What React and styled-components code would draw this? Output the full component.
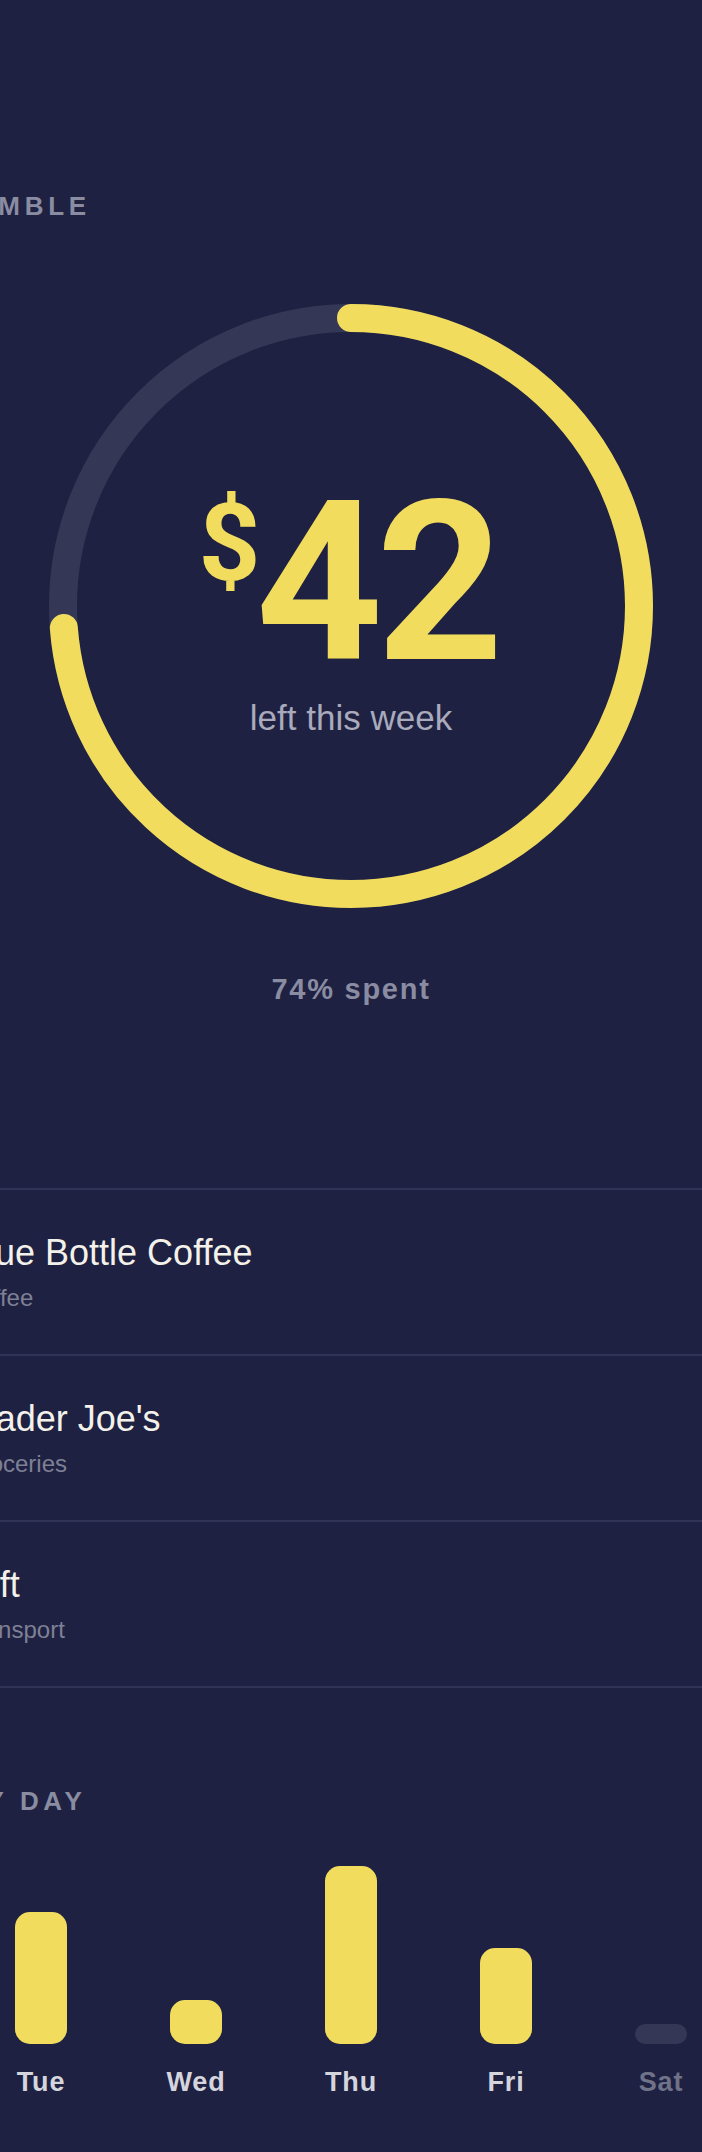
import React from "react";
import styled, { createGlobalStyle } from "styled-components";

const BG = "#1e2141";
const YELLOW = "#f1dc5e";
const TRACK = "#343856";
const RULE = "#303456";

const GlobalStyle = createGlobalStyle`
  html, body {
    margin: 0;
    padding: 0;
    background: ${BG};
    overflow: hidden;
  }
  body {
    font-family: "Liberation Sans", Arial, Helvetica, sans-serif;
    -webkit-font-smoothing: antialiased;
  }
  ul { margin: 0; padding: 0; list-style: none; }
`;

const Screen = styled.main`
  display: flex;
  justify-content: center;
  width: 100%;
  min-height: 2152px;
  background: ${BG};
`;

const Column = styled.div`
  flex: 0 0 776px;
  width: 776px;
  display: flex;
  flex-direction: column;
  padding: 190px 0 52px;
  box-sizing: border-box;
`;

const SectionLabel = styled.h2`
  margin: ${(p) => p.$top || 0}px 0 0;
  font-size: 26px;
  line-height: 32px;
  font-weight: 700;
  letter-spacing: 0.18em;
  text-transform: uppercase;
  color: #8a8ca2;
`;

/* ---------- weekly ring ---------- */

const RingWrap = styled.section`
  display: grid;
  place-items: center;
  width: 604px;
  height: 604px;
  margin: 82px auto 0;
  & > * {
    grid-area: 1 / 1;
  }
`;

const RingSvg = styled.svg`
  display: block;
  width: 604px;
  height: 604px;
`;

const Readout = styled.div`
  display: flex;
  flex-direction: column;
  align-items: center;
`;

const Amount = styled.div`
  display: flex;
  align-items: flex-start;
  color: ${YELLOW};
  font-family: Roboto, "Liberation Sans", Arial, sans-serif;
  font-weight: 700;
`;

const Currency = styled.span`
  font-size: 108px;
  line-height: 1;
  margin-top: 17px;
  letter-spacing: -5px;
`;

const Figure = styled.span`
  font-size: 222px;
  line-height: 1;
  letter-spacing: -0.03em;
  margin-right: 0.03em;
`;

const Caption = styled.div`
  margin-top: 2px;
  font-size: 35px;
  line-height: 44px;
  color: #a9aabb;
`;

const Spent = styled.div`
  margin-top: 63px;
  text-align: center;
  font-size: 29px;
  line-height: 36px;
  font-weight: 700;
  letter-spacing: 0.06em;
  color: #8a8ca2;
`;

/* ---------- transactions ---------- */

const List = styled.ul`
  margin-top: 181px !important;
`;

const Row = styled.li`
  display: flex;
  align-items: center;
  padding: 41px 0 41px;
  border-top: 2px solid ${RULE};
  &:last-child {
    border-bottom: 2px solid ${RULE};
  }
`;

const RowText = styled.div`
  display: flex;
  flex-direction: column;
  gap: 8px;
`;

const Merchant = styled.span`
  font-size: 36px;
  line-height: 44px;
  color: #f3f1ea;
`;

const Category = styled.span`
  font-size: 24px;
  line-height: 30px;
  color: #7e8096;
`;

/* ---------- spending by day ---------- */

const Chart = styled.div`
  display: flex;
  justify-content: center;
  margin-top: 7px;
`;

const Day = styled.div`
  flex: 0 0 155px;
  display: flex;
  flex-direction: column;
  align-items: center;
`;

const BarSlot = styled.div`
  height: 220px;
  display: flex;
  align-items: flex-end;
`;

const Bar = styled.div`
  width: 52px;
  border-radius: ${(p) => (p.$empty ? "10px" : "15px")};
  background: ${(p) => (p.$empty ? TRACK : YELLOW)};
`;

const DayName = styled.span`
  margin-top: 22px;
  font-size: 27px;
  line-height: 32px;
  font-weight: 700;
  letter-spacing: 0.03em;
  color: ${(p) => (p.$future ? "#6f7289" : "#d5d5dd")};
`;

const BUDGET = 160;
const SPENT = 118;
const CHART_MAX = 40;

const transactions = [
  { name: "Blue Bottle Coffee", category: "Coffee" },
  { name: "Trader Joe's", category: "Groceries" },
  { name: "Lyft", category: "Transport" },
];

const days = [
  { name: "Mon", amount: 36.1 },
  { name: "Tue", amount: 24 },
  { name: "Wed", amount: 8 },
  { name: "Thu", amount: 32.4 },
  { name: "Fri", amount: 17.5 },
  { name: "Sat", amount: 0, future: true },
  { name: "Sun", amount: 0, future: true },
];

function BudgetRing({ fraction }) {
  const r = 288;
  const c = 2 * Math.PI * r;
  return (
    <RingSvg viewBox="0 0 604 604">
      <circle cx="302" cy="302" r={r} fill="none" stroke={TRACK} strokeWidth="28" />
      <circle
        cx="302"
        cy="302"
        r={r}
        fill="none"
        stroke={YELLOW}
        strokeWidth="28"
        strokeLinecap="round"
        strokeDasharray={`${fraction * c} ${c}`}
        transform="rotate(-90 302 302)"
      />
    </RingSvg>
  );
}

export default function App() {
  const fraction = SPENT / BUDGET;
  const left = BUDGET - SPENT;
  return (
    <>
      <GlobalStyle />
      <Screen>
        <Column>
          <SectionLabel>Nimble</SectionLabel>

          <RingWrap>
            <BudgetRing fraction={fraction} />
            <Readout>
              <Amount>
                <Currency>$</Currency>
                <Figure>{left}</Figure>
              </Amount>
              <Caption>left this week</Caption>
            </Readout>
          </RingWrap>

          <Spent>{Math.round(fraction * 100)}% spent</Spent>

          <List>
            {transactions.map((t) => (
              <Row key={t.name}>
                <RowText>
                  <Merchant>{t.name}</Merchant>
                  <Category>{t.category}</Category>
                </RowText>
              </Row>
            ))}
          </List>

          <SectionLabel $top={97}>By day</SectionLabel>

          <Chart>
            {days.map((d) => (
              <Day key={d.name}>
                <BarSlot>
                  <Bar
                    $empty={d.amount === 0}
                    style={{ height: d.amount === 0 ? 20 : (d.amount / CHART_MAX) * 220 }}
                  />
                </BarSlot>
                <DayName $future={d.future}>{d.name}</DayName>
              </Day>
            ))}
          </Chart>
        </Column>
      </Screen>
    </>
  );
}
